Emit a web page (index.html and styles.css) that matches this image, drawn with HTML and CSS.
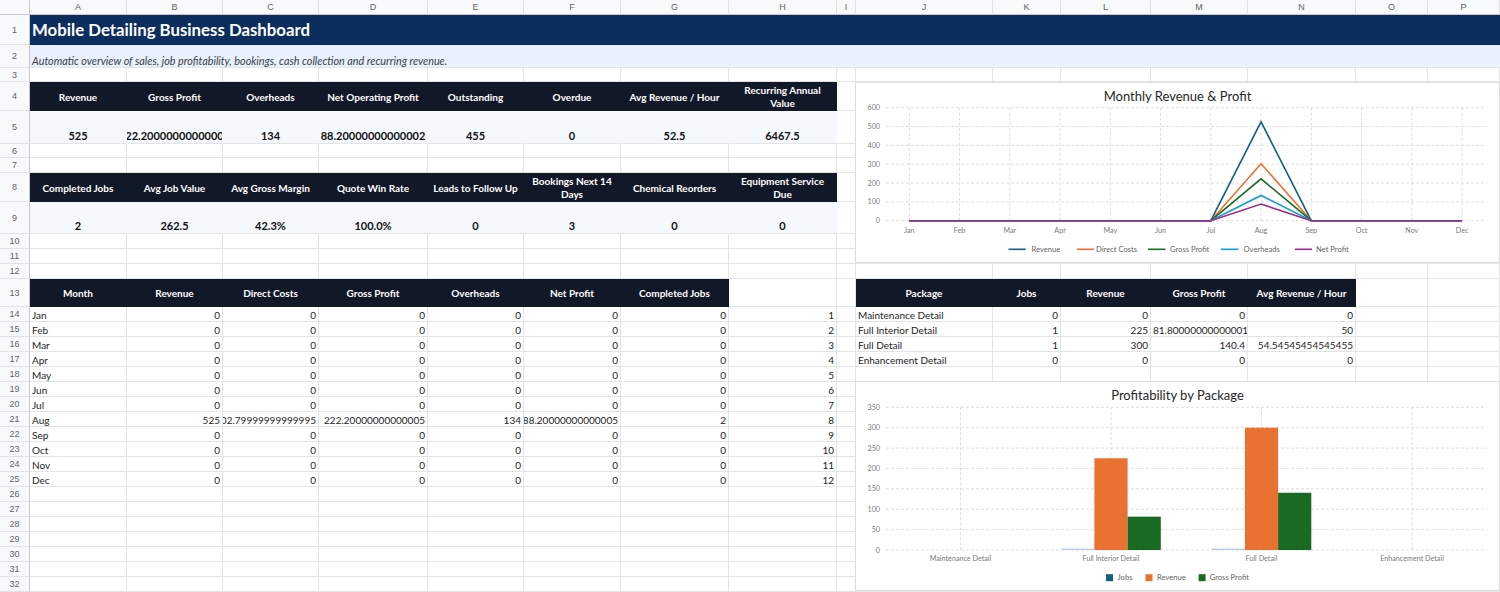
FILE: index.html
```html
<!DOCTYPE html>
<html lang="en">
<head>
<meta charset="utf-8">
<title>Mobile Detailing Business Dashboard</title>
<link rel="stylesheet" href="styles.css">
</head>
<body>
<div class="wrap">
<table class="grid">
<colgroup>
<col class="w30"><col class="w97"><col class="w96"><col class="w96"><col class="w109"><col class="w96"><col class="w97"><col class="w108"><col class="w108"><col class="w19"><col class="w137"><col class="w68"><col class="w90"><col class="w97"><col class="w108"><col class="w72"><col class="w72">
</colgroup>
<tr class="h15"><th class="corner"></th><th class="ch">A</th><th class="ch">B</th><th class="ch">C</th><th class="ch">D</th><th class="ch">E</th><th class="ch">F</th><th class="ch">G</th><th class="ch">H</th><th class="ch">I</th><th class="ch">J</th><th class="ch">K</th><th class="ch">L</th><th class="ch">M</th><th class="ch">N</th><th class="ch">O</th><th class="ch">P</th></tr>
<tr class="h30"><th class="rn">1</th><td class="title" colspan="16">Mobile Detailing Business Dashboard</td></tr>
<tr class="h23"><th class="rn">2</th><td class="sub" colspan="16">Automatic overview of sales, job profitability, bookings, cash collection and recurring revenue.</td></tr>
<tr class="h14"><th class="rn">3</th><td></td><td></td><td></td><td></td><td></td><td></td><td></td><td></td><td></td><td></td><td></td><td></td><td></td><td></td><td></td><td></td></tr>
<tr class="h28"><th class="rn">4</th><td class="kh">Revenue</td><td class="kh">Gross Profit</td><td class="kh">Overheads</td><td class="kh">Net Operating Profit</td><td class="kh">Outstanding</td><td class="kh">Overdue</td><td class="kh">Avg Revenue / Hour</td><td class="kh">Recurring Annual<br>Value</td><td></td><td></td><td></td><td></td><td></td><td></td><td></td><td></td></tr>
<tr class="h33"><th class="rn">5</th><td class="kv">525</td><td class="kv flush"><div class="clip mid">222.20000000000005</div></td><td class="kv">134</td><td class="kv flush"><div class="clip mid">88.20000000000002</div></td><td class="kv">455</td><td class="kv">0</td><td class="kv">52.5</td><td class="kv">6467.5</td><td></td><td></td><td></td><td></td><td></td><td></td><td></td><td></td></tr>
<tr class="h14"><th class="rn">6</th><td></td><td></td><td></td><td></td><td></td><td></td><td></td><td></td><td></td><td></td><td></td><td></td><td></td><td></td><td></td><td></td></tr>
<tr class="h15"><th class="rn">7</th><td></td><td></td><td></td><td></td><td></td><td></td><td></td><td></td><td></td><td></td><td></td><td></td><td></td><td></td><td></td><td></td></tr>
<tr class="h29"><th class="rn">8</th><td class="kh">Completed Jobs</td><td class="kh">Avg Job Value</td><td class="kh">Avg Gross Margin</td><td class="kh">Quote Win Rate</td><td class="kh">Leads to Follow Up</td><td class="kh">Bookings Next 14<br>Days</td><td class="kh">Chemical Reorders</td><td class="kh">Equipment Service<br>Due</td><td></td><td></td><td></td><td></td><td></td><td></td><td></td><td></td></tr>
<tr class="h32"><th class="rn">9</th><td class="kv">2</td><td class="kv">262.5</td><td class="kv">42.3%</td><td class="kv">100.0%</td><td class="kv">0</td><td class="kv">3</td><td class="kv">0</td><td class="kv">0</td><td></td><td></td><td></td><td></td><td></td><td></td><td></td><td></td></tr>
<tr class="h15"><th class="rn">10</th><td></td><td></td><td></td><td></td><td></td><td></td><td></td><td></td><td></td><td></td><td></td><td></td><td></td><td></td><td></td><td></td></tr>
<tr class="h15"><th class="rn">11</th><td></td><td></td><td></td><td></td><td></td><td></td><td></td><td></td><td></td><td></td><td></td><td></td><td></td><td></td><td></td><td></td></tr>
<tr class="h15"><th class="rn">12</th><td></td><td></td><td></td><td></td><td></td><td></td><td></td><td></td><td></td><td></td><td></td><td></td><td></td><td></td><td></td><td></td></tr>
<tr class="h28"><th class="rn">13</th><td class="kh">Month</td><td class="kh">Revenue</td><td class="kh">Direct Costs</td><td class="kh">Gross Profit</td><td class="kh">Overheads</td><td class="kh">Net Profit</td><td class="kh">Completed Jobs</td><td></td><td></td><td class="kh">Package</td><td class="kh">Jobs</td><td class="kh">Revenue</td><td class="kh">Gross Profit</td><td class="kh">Avg Revenue / Hour</td><td></td><td></td></tr>
<tr class="h15"><th class="rn">14</th><td>Jan</td><td class="n">0</td><td class="n">0</td><td class="n">0</td><td class="n">0</td><td class="n">0</td><td class="n">0</td><td class="n">1</td><td></td><td>Maintenance Detail</td><td class="n">0</td><td class="n">0</td><td class="n">0</td><td class="n">0</td><td></td><td></td></tr>
<tr class="h15"><th class="rn">15</th><td>Feb</td><td class="n">0</td><td class="n">0</td><td class="n">0</td><td class="n">0</td><td class="n">0</td><td class="n">0</td><td class="n">2</td><td></td><td>Full Interior Detail</td><td class="n">1</td><td class="n">225</td><td class="n">81.80000000000001</td><td class="n">50</td><td></td><td></td></tr>
<tr class="h15"><th class="rn">16</th><td>Mar</td><td class="n">0</td><td class="n">0</td><td class="n">0</td><td class="n">0</td><td class="n">0</td><td class="n">0</td><td class="n">3</td><td></td><td>Full Detail</td><td class="n">1</td><td class="n">300</td><td class="n">140.4</td><td class="n">54.54545454545455</td><td></td><td></td></tr>
<tr class="h15"><th class="rn">17</th><td>Apr</td><td class="n">0</td><td class="n">0</td><td class="n">0</td><td class="n">0</td><td class="n">0</td><td class="n">0</td><td class="n">4</td><td></td><td>Enhancement Detail</td><td class="n">0</td><td class="n">0</td><td class="n">0</td><td class="n">0</td><td></td><td></td></tr>
<tr class="h15"><th class="rn">18</th><td>May</td><td class="n">0</td><td class="n">0</td><td class="n">0</td><td class="n">0</td><td class="n">0</td><td class="n">0</td><td class="n">5</td><td></td><td></td><td></td><td></td><td></td><td></td><td></td><td></td></tr>
<tr class="h15"><th class="rn">19</th><td>Jun</td><td class="n">0</td><td class="n">0</td><td class="n">0</td><td class="n">0</td><td class="n">0</td><td class="n">0</td><td class="n">6</td><td></td><td></td><td></td><td></td><td></td><td></td><td></td><td></td></tr>
<tr class="h15"><th class="rn">20</th><td>Jul</td><td class="n">0</td><td class="n">0</td><td class="n">0</td><td class="n">0</td><td class="n">0</td><td class="n">0</td><td class="n">7</td><td></td><td></td><td></td><td></td><td></td><td></td><td></td><td></td></tr>
<tr class="h15"><th class="rn">21</th><td>Aug</td><td class="n">525</td><td class="n flushl"><div class="clip end">302.79999999999995</div></td><td class="n">222.20000000000005</td><td class="n">134</td><td class="n flushl"><div class="clip end">88.20000000000005</div></td><td class="n">2</td><td class="n">8</td><td></td><td></td><td></td><td></td><td></td><td></td><td></td><td></td></tr>
<tr class="h15"><th class="rn">22</th><td>Sep</td><td class="n">0</td><td class="n">0</td><td class="n">0</td><td class="n">0</td><td class="n">0</td><td class="n">0</td><td class="n">9</td><td></td><td></td><td></td><td></td><td></td><td></td><td></td><td></td></tr>
<tr class="h15"><th class="rn">23</th><td>Oct</td><td class="n">0</td><td class="n">0</td><td class="n">0</td><td class="n">0</td><td class="n">0</td><td class="n">0</td><td class="n">10</td><td></td><td></td><td></td><td></td><td></td><td></td><td></td><td></td></tr>
<tr class="h15"><th class="rn">24</th><td>Nov</td><td class="n">0</td><td class="n">0</td><td class="n">0</td><td class="n">0</td><td class="n">0</td><td class="n">0</td><td class="n">11</td><td></td><td></td><td></td><td></td><td></td><td></td><td></td><td></td></tr>
<tr class="h15"><th class="rn">25</th><td>Dec</td><td class="n">0</td><td class="n">0</td><td class="n">0</td><td class="n">0</td><td class="n">0</td><td class="n">0</td><td class="n">12</td><td></td><td></td><td></td><td></td><td></td><td></td><td></td><td></td></tr>
<tr class="h15"><th class="rn">26</th><td></td><td></td><td></td><td></td><td></td><td></td><td></td><td></td><td></td><td></td><td></td><td></td><td></td><td></td><td></td><td></td></tr>
<tr class="h15"><th class="rn">27</th><td></td><td></td><td></td><td></td><td></td><td></td><td></td><td></td><td></td><td></td><td></td><td></td><td></td><td></td><td></td><td></td></tr>
<tr class="h15"><th class="rn">28</th><td></td><td></td><td></td><td></td><td></td><td></td><td></td><td></td><td></td><td></td><td></td><td></td><td></td><td></td><td></td><td></td></tr>
<tr class="h15"><th class="rn">29</th><td></td><td></td><td></td><td></td><td></td><td></td><td></td><td></td><td></td><td></td><td></td><td></td><td></td><td></td><td></td><td></td></tr>
<tr class="h15"><th class="rn">30</th><td></td><td></td><td></td><td></td><td></td><td></td><td></td><td></td><td></td><td></td><td></td><td></td><td></td><td></td><td></td><td></td></tr>
<tr class="h15"><th class="rn">31</th><td></td><td></td><td></td><td></td><td></td><td></td><td></td><td></td><td></td><td></td><td></td><td></td><td></td><td></td><td></td><td></td></tr>
<tr class="h15"><th class="rn">32</th><td></td><td></td><td></td><td></td><td></td><td></td><td></td><td></td><td></td><td></td><td></td><td></td><td></td><td></td><td></td><td></td></tr>
</table>

<div class="chart chart-line">
<svg width="643" height="179" viewBox="0 0 643 179">
<text class="ctitle" x="321.5" y="18" text-anchor="middle">Monthly Revenue &amp; Profit</text>
<g class="gl">
<line x1="30" x2="631" y1="24.7" y2="24.7"/>
<line x1="30" x2="631" y1="43.53" y2="43.53"/>
<line x1="30" x2="631" y1="62.37" y2="62.37"/>
<line x1="30" x2="631" y1="81.2" y2="81.2"/>
<line x1="30" x2="631" y1="100.03" y2="100.03"/>
<line x1="30" x2="631" y1="118.87" y2="118.87"/>
<line x1="30" x2="631" y1="137.7" y2="137.7"/>
<line x1="53.3" x2="53.3" y1="24.7" y2="137.7"/>
<line x1="103.55" x2="103.55" y1="24.7" y2="137.7"/>
<line x1="153.8" x2="153.8" y1="24.7" y2="137.7"/>
<line x1="204.05" x2="204.05" y1="24.7" y2="137.7"/>
<line x1="254.3" x2="254.3" y1="24.7" y2="137.7"/>
<line x1="304.55" x2="304.55" y1="24.7" y2="137.7"/>
<line x1="354.8" x2="354.8" y1="24.7" y2="137.7"/>
<line x1="405.05" x2="405.05" y1="24.7" y2="137.7"/>
<line x1="455.3" x2="455.3" y1="24.7" y2="137.7"/>
<line x1="505.55" x2="505.55" y1="24.7" y2="137.7"/>
<line x1="555.8" x2="555.8" y1="24.7" y2="137.7"/>
<line x1="606.05" x2="606.05" y1="24.7" y2="137.7"/>
</g>
<g class="ax" text-anchor="end">
<text x="24" y="27.2">600</text>
<text x="24" y="46">500</text>
<text x="24" y="64.9">400</text>
<text x="24" y="83.7">300</text>
<text x="24" y="102.5">200</text>
<text x="24" y="121.4">100</text>
<text x="24" y="140.2">0</text>
</g>
<g class="ax" text-anchor="middle">
<text x="53.3" y="150.4">Jan</text>
<text x="103.55" y="150.4">Feb</text>
<text x="153.8" y="150.4">Mar</text>
<text x="204.05" y="150.4">Apr</text>
<text x="254.3" y="150.4">May</text>
<text x="304.55" y="150.4">Jun</text>
<text x="354.8" y="150.4">Jul</text>
<text x="405.05" y="150.4">Aug</text>
<text x="455.3" y="150.4">Sep</text>
<text x="505.55" y="150.4">Oct</text>
<text x="555.8" y="150.4">Nov</text>
<text x="606.05" y="150.4">Dec</text>
</g>
<polyline class="ln s1" points="53.3,137.7 354.8,137.7 405.05,38.83 455.3,137.7 606.05,137.7"/>
<polyline class="ln s2" points="53.3,137.7 354.8,137.7 405.05,80.67 455.3,137.7 606.05,137.7"/>
<polyline class="ln s3" points="53.3,137.7 354.8,137.7 405.05,95.85 455.3,137.7 606.05,137.7"/>
<polyline class="ln s4" points="53.3,137.7 354.8,137.7 405.05,112.46 455.3,137.7 606.05,137.7"/>
<polyline class="ln s5" points="53.3,137.7 354.8,137.7 405.05,121.09 455.3,137.7 606.05,137.7"/>
<g class="lg">
<line class="ln s1" x1="152.5" x2="169.8" y1="166.3" y2="166.3"/><text x="175.5" y="168.9">Revenue</text>
<line class="ln s2" x1="221" x2="238" y1="166.3" y2="166.3"/><text x="240" y="168.9">Direct Costs</text>
<line class="ln s3" x1="292" x2="309.5" y1="166.3" y2="166.3"/><text x="314" y="168.9">Gross Profit</text>
<line class="ln s4" x1="365" x2="382.5" y1="166.3" y2="166.3"/><text x="387.5" y="168.9">Overheads</text>
<line class="ln s5" x1="439" x2="456" y1="166.3" y2="166.3"/><text x="460" y="168.9">Net Profit</text>
</g>
</svg>
</div>

<div class="chart chart-bar">
<svg width="643" height="208" viewBox="0 0 643 208">
<text class="ctitle" x="321.5" y="17.9" text-anchor="middle">Profitability by Package</text>
<g class="gl">
<line x1="30" x2="631" y1="25.3" y2="25.3"/>
<line x1="30" x2="631" y1="45.68" y2="45.68"/>
<line x1="30" x2="631" y1="66.07" y2="66.07"/>
<line x1="30" x2="631" y1="86.46" y2="86.46"/>
<line x1="30" x2="631" y1="106.84" y2="106.84"/>
<line x1="30" x2="631" y1="127.23" y2="127.23"/>
<line x1="30" x2="631" y1="147.61" y2="147.61"/>
<line x1="30" x2="631" y1="168" y2="168"/>
<line x1="104.5" x2="104.5" y1="25.3" y2="168"/>
<line x1="255" x2="255" y1="25.3" y2="168"/>
<line x1="405.5" x2="405.5" y1="25.3" y2="168"/>
<line x1="556" x2="556" y1="25.3" y2="168"/>
</g>
<g class="ax" text-anchor="end">
<text x="24" y="27.8">350</text>
<text x="24" y="48.2">300</text>
<text x="24" y="68.6">250</text>
<text x="24" y="89">200</text>
<text x="24" y="109.3">150</text>
<text x="24" y="129.7">100</text>
<text x="24" y="150.1">50</text>
<text x="24" y="170.5">0</text>
</g>
<g class="ax" text-anchor="middle">
<text x="104.5" y="179.3">Maintenance Detail</text>
<text x="255" y="179.3">Full Interior Detail</text>
<text x="405.5" y="179.3">Full Detail</text>
<text x="556" y="179.3">Enhancement Detail</text>
</g>
<rect class="b1" x="205.2" y="166.6" width="33.2" height="1.4"/>
<rect class="b2" x="238.4" y="76.27" width="33.2" height="91.73"/>
<rect class="b3" x="271.6" y="134.65" width="33.2" height="33.35"/>
<rect class="b1" x="355.7" y="166.6" width="33.2" height="1.4"/>
<rect class="b2" x="388.9" y="45.69" width="33.2" height="122.31"/>
<rect class="b3" x="422.1" y="110.76" width="33.2" height="57.24"/>
<g class="lg">
<rect class="sq1" x="250" y="192.2" width="7" height="7"/><text x="261.5" y="198.4">Jobs</text>
<rect class="sq2" x="289.5" y="192.2" width="7" height="7"/><text x="301" y="198.4">Revenue</text>
<rect class="sq3" x="342.6" y="192.2" width="7" height="7"/><text x="353.7" y="198.4">Gross Profit</text>
</g>
</svg>
</div>
</div>
</body>
</html>
```

FILE: styles.css
```css
* { box-sizing: border-box; }

body {
  margin: 0;
  background: #ffffff;
  font-family: Lato, "Noto Sans", sans-serif;
}

.wrap {
  position: relative;
  width: 1500px;
  height: 592px;
  overflow: hidden;
}

/* ---------- sheet grid ---------- */
.grid {
  border-collapse: separate;
  border-spacing: 0;
  table-layout: fixed;
  width: 1500px;
}

.w30 { width: 30px; }
.w97 { width: 97px; }
.w96 { width: 96px; }
.w109 { width: 109px; }
.w108 { width: 108px; }
.w19 { width: 19px; }
.w137 { width: 137px; }
.w68 { width: 68px; }
.w90 { width: 90px; }
.w72 { width: 72px; }

.h14 { height: 14px; }
.h15 { height: 15px; }
.h23 { height: 23px; }
.h28 { height: 28px; }
.h29 { height: 29px; }
.h30 { height: 30px; }
.h32 { height: 32px; }
.h33 { height: 33px; }

td {
  border-right: 1px solid #e3e4e4;
  border-bottom: 1px solid #e3e4e4;
  padding: 0 2px;
  font-size: 10px;
  line-height: 11px;
  color: #1e1e1e;
  vertical-align: bottom;
  white-space: nowrap;
  overflow: hidden;
}

th {
  padding: 0;
  font-family: "Liberation Sans", Arial, sans-serif;
  font-weight: normal;
  font-size: 9px;
  color: #5f6368;
  background: #f8f9fa;
  text-align: center;
  vertical-align: middle;
}

.corner {
  border-right: 1px solid #c7c9cc;
  border-bottom: 1px solid #c7c9cc;
}

.ch {
  border-right: 1px solid #e0e2e4;
  border-bottom: 1px solid #c7c9cc;
}

.rn {
  border-right: 1px solid #c7c9cc;
  border-bottom: 1px solid #e0e2e4;
}

.n { text-align: right; }

.title {
  background: #0c2e5f;
  border-right-color: #0c2e5f;
  border-bottom-color: #0c2e5f;
  color: #ffffff;
  font-weight: 700;
  font-size: 16.8px;
  line-height: 22px;
  vertical-align: middle;
}

.sub {
  background: #e9f1fd;
  border-right-color: #e9f1fd;
  color: #3a3f47;
  font-style: italic;
  font-size: 10.8px;
  line-height: 13px;
}

.kh {
  background: #111827;
  border-right-color: #111827;
  border-bottom-color: #111827;
  color: #ffffff;
  font-weight: 700;
  font-size: 10px;
  line-height: 13px;
  padding-top: 2px;
  text-align: center;
  vertical-align: middle;
  white-space: normal;
}

.kv {
  background: #f5f8fc;
  border-right-color: #f5f8fc;
  color: #111111;
  font-weight: 700;
  font-size: 11px;
  line-height: 13px;
  padding-bottom: 1px;
  text-align: center;
}

.flush { padding-left: 0; padding-right: 0; }
.flushl { padding-left: 0; }

.clip {
  display: flex;
  overflow: hidden;
  white-space: nowrap;
}
.clip.mid { justify-content: center; }
.clip.end { justify-content: flex-end; }

/* ---------- floating charts ---------- */
.chart {
  position: absolute;
  left: 855px;
  width: 645px;
  background: #ffffff;
  border: 1px solid #dcdde0;
}
.chart svg { display: block; }

.chart-line { top: 82px; height: 181px; }
.chart-bar { top: 381px; height: 210px; }

.ctitle {
  font-family: Lato, "Noto Sans", sans-serif;
  font-size: 13px;
  fill: #262626;
}

.gl line {
  stroke: #d7d7d7;
  stroke-width: 0.8;
  stroke-dasharray: 3 2;
}

.ax {
  font-family: Lato, "Noto Sans", sans-serif;
  font-size: 7.2px;
  fill: #7b7b7b;
}

.lg {
  font-family: Lato, "Noto Sans", sans-serif;
  font-size: 7.6px;
  fill: #666666;
}

.ln { fill: none; stroke-width: 1.6; }
.s1 { stroke: #156082; }
.s2 { stroke: #e97132; }
.s3 { stroke: #196b24; }
.s4 { stroke: #0f9ed5; }
.s5 { stroke: #a02b93; }

.b1 { fill: #b7cde0; }
.b2 { fill: #e97132; }
.b3 { fill: #196b24; }
.sq1 { fill: #156082; }
.sq2 { fill: #e97132; }
.sq3 { fill: #196b24; }
```
